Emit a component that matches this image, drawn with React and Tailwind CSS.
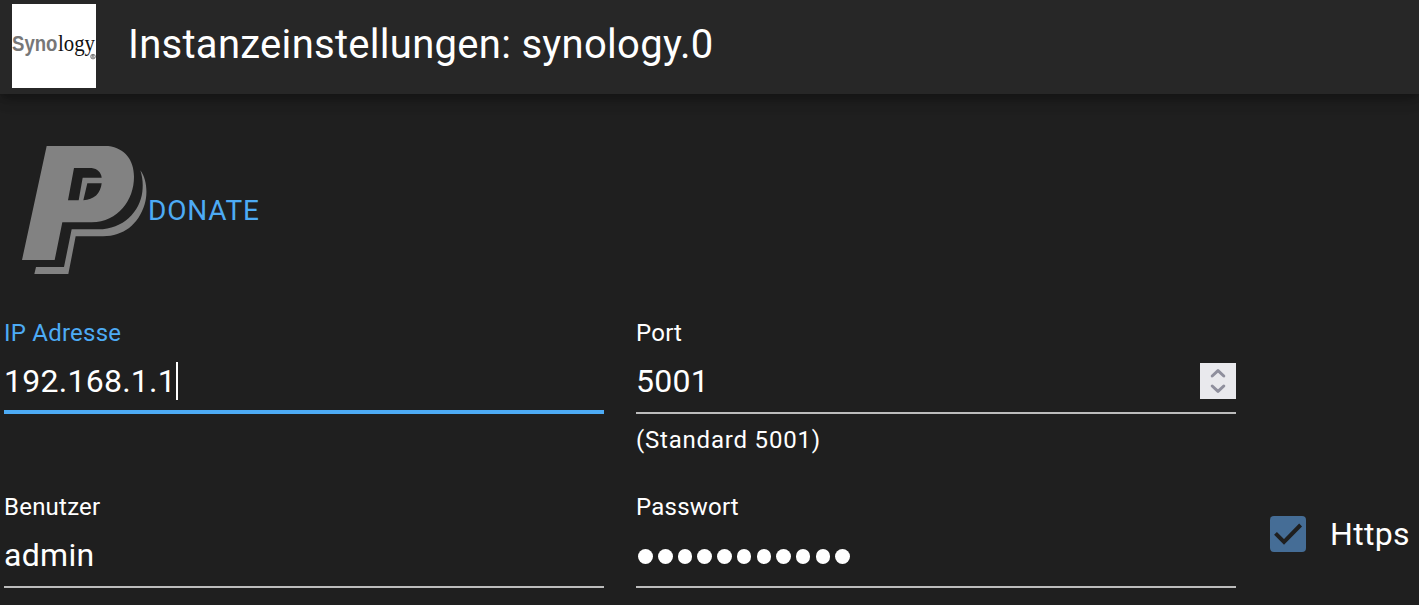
import React from "react";

function SynologyLogo() {
  return (
    <svg className="h-[84px] w-[84px] shrink-0 bg-white" viewBox="0 0 84 84">
      <text x="0" y="47" textLength="45.4" lengthAdjust="spacingAndGlyphs" fontFamily="Liberation Sans, sans-serif" fontWeight="700" fontSize="21.5" fill="#777777">Syno</text>
      <text x="46" y="47" textLength="37" lengthAdjust="spacingAndGlyphs" fontFamily="Liberation Serif, serif" fontSize="24" fill="#111111">logy</text>
      <g fill="none" stroke="#555555" strokeWidth="0.8">
        <circle cx="81" cy="52.6" r="2.3" />
        <path d="M80.2 54V51.4H81.4Q82.3 52.2 81.2 52.7L82.2 54" />
      </g>
    </svg>
  );
}

function PayPalIcon() {
  return (
    <svg className="h-32 w-32 shrink-0" viewBox="60 48 384 384" fill="#828282">
      <path
        fillRule="evenodd"
        d="M140 48H325C375 55 402 90 402 140C402 210 355 275 275 277H187L164 390H66ZM222 114L204 211H236L248 143H305C304 128 292 116 275 114ZM262 160L250 211C282 210 302 190 305 160Z"
      />
      <path d="M421 121C440 146 444 190 434 223C415 285 370 318 310 319H227L205 432H103L108 411H192L215 298H295C370 297 420 245 427 185C430 160 427 140 421 121Z" />
    </svg>
  );
}

function Field({ label, focused, helper, children }) {
  return (
    <div className="flex w-[600px] flex-col">
      <div className={"h-8 text-2xl leading-[30px] tracking-[0.225px] " + (focused ? "text-[#4dabf5]" : "text-white")}>
        {label}
      </div>
      <div
        className={
          "flex h-16 items-center text-[32px] tracking-[0.3px] " +
          (focused ? "border-b-4 border-[#4dabf5]" : "border-b-2 border-[#bcbcbc]")
        }
      >
        {children}
      </div>
      {helper && <div className="mt-[6px] text-2xl leading-10 tracking-[0.8px]">{helper}</div>}
    </div>
  );
}

function Spinner() {
  return (
    <svg className="ml-auto h-9 w-9 bg-[#e9e9ed]" viewBox="0 0 36 36" fill="none" stroke="#8f8f9d" strokeWidth="3" strokeLinecap="round" strokeLinejoin="round">
      <path d="M12.2 13L18 7.6L23.8 13M12.2 23L18 28.4L23.8 23" />
    </svg>
  );
}

export default function App() {
  return (
    <div className="flex h-[605px] w-[1419px] flex-col overflow-hidden bg-[#1f1f1f] font-['Roboto',sans-serif] text-white">
      <header className="flex h-[94px] shrink-0 items-start gap-8 bg-[#272727] pt-1 pl-3 shadow-[0_4px_8px_-2px_rgba(0,0,0,0.2),0_8px_10px_rgba(0,0,0,0.14),0_2px_20px_rgba(0,0,0,0.12)]">
        <SynologyLogo />
        <h1 className="pt-[9px] text-[40px] leading-[64px] tracking-[0.29px]">Instanzeinstellungen: synology.0</h1>
      </header>

      <main className="flex flex-col">
        <a className="mt-[52px] ml-5 flex h-32 items-center text-[28px] tracking-[0.8px] text-[#4dabf5]">
          <PayPalIcon />
          <span className="pt-[2px]">DONATE</span>
        </a>

        <div className="mt-11 flex h-[174px] gap-8 pl-1">
          <Field label="IP Adresse" focused>
            <span className="pt-[2px] tracking-[0.26px]">192.168.1.1</span>
            <span className="mt-[2px] h-[38px] w-[2px] bg-white" />
          </Field>
          <Field label="Port" helper="(Standard 5001)">
            <span>5001</span>
            <Spinner />
          </Field>
        </div>

        <div className="flex gap-8 pl-1">
          <Field label="Benutzer">
            <span>admin</span>
          </Field>
          <Field label="Passwort">
            <span className="flex gap-[5.1px] pt-[3px] pl-[2.4px]">
              {Array.from({ length: 11 }, (_, i) => (
                <span key={i} className="h-[14.5px] w-[14.6px] rounded-full bg-white" />
              ))}
            </span>
          </Field>
          <label className="mt-6 ml-[2px] flex h-9 items-center gap-6 self-start text-[32px] tracking-[0.3px]">
            <svg className="h-9 w-9 shrink-0" viewBox="0 0 36 36">
              <rect width="36" height="36" rx="4" fill="#456d96" />
              <path d="M5.5 17.3L14 25.8L30.6 9" fill="none" stroke="#1f1f1f" strokeWidth="4" />
            </svg>
            Https
          </label>
        </div>
      </main>
    </div>
  );
}
